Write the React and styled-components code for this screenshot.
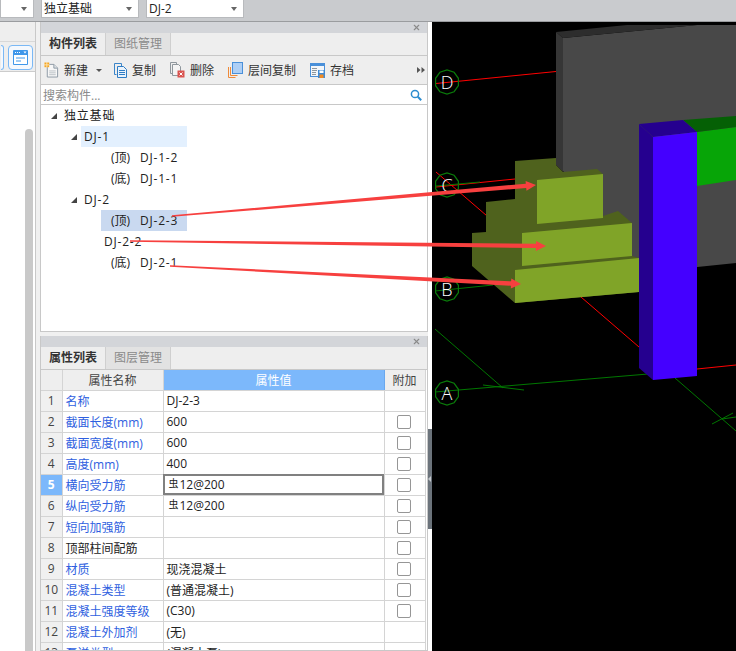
import React from 'react'
import styled, { createGlobalStyle } from 'styled-components'
import { X } from 'lucide-react'

const treeRows = [
  { level: 0, open: true, code: '独立基础' },
  { level: 1, open: true, code: 'DJ-1', tone: 'hover' },
  { level: 2, tag: '(顶)', code: 'DJ-1-2' },
  { level: 2, tag: '(底)', code: 'DJ-1-1' },
  { level: 1, open: true, code: 'DJ-2' },
  { level: 2, tag: '(顶)', code: 'DJ-2-3', tone: 'selected' },
  { level: 2, code: 'DJ-2-2', tight: true },
  { level: 2, tag: '(底)', code: 'DJ-2-1' },
]

const propRows = [
  { name: '名称', value: 'DJ-2-3' },
  { name: '截面长度(mm)', value: '600', check: true },
  { name: '截面宽度(mm)', value: '600', check: true },
  { name: '高度(mm)', value: '400', check: true },
  { name: '横向受力筋', value: '12@200', rebar: true, check: true, active: true },
  { name: '纵向受力筋', value: '12@200', rebar: true, check: true },
  { name: '短向加强筋', value: '', check: true },
  { name: '顶部柱间配筋', value: '', check: true, plain: true },
  { name: '材质', value: '现浇混凝土', check: true },
  { name: '混凝土类型', value: '(普通混凝土)', check: true },
  { name: '混凝土强度等级', value: '(C30)', check: true },
  { name: '混凝土外加剂', value: '(无)' },
  { name: '泵送类型', value: '(混凝土泵)' },
]

const axisMarks = [
  { label: 'D', y: 82 },
  { label: 'C', y: 185 },
  { label: 'B', y: 289 },
  { label: 'A', y: 393 },
]

const arrows = [
  { from: [172, 216], to: [536, 185] },
  { from: [130, 241], to: [546, 246] },
  { from: [170, 266], to: [521, 284] },
]

const ringPoints = (cy) =>
  Array.from({ length: 10 }, (_, i) => {
    const a = (i * Math.PI) / 5 + Math.PI / 10
    return `${(447 + 12 * Math.cos(a)).toFixed(1)},${(cy + 12 * Math.sin(a)).toFixed(1)}`
  }).join(' ')

// tapered shaft + head, widening towards the tip
const arrowPoints = ({ from, to }) => {
  const dx = to[0] - from[0]
  const dy = to[1] - from[1]
  const len = Math.hypot(dx, dy)
  const ux = dx / len
  const uy = dy / len
  const at = (along, side) => {
    const x = from[0] + ux * along - uy * side
    const y = from[1] + uy * along + ux * side
    return `${x.toFixed(1)},${y.toFixed(1)}`
  }
  const neck = len - 10
  return [at(0, 0.8), at(neck, 2.2), at(neck, 5), at(len, 0), at(neck, -5), at(neck, -2.2), at(0, -0.8)].join(' ')
}

const NewIcon = () => (
  <svg width="15" height="16" viewBox="0 0 16 17">
    <path d="M3.5 2.5h7l4 4v9.500h-11z" fill="#f7f7f7" stroke="#8b98a3" />
    <path d="M10.500 2.500v4h4" fill="#dfe3e6" stroke="#8b98a3" />
    <path d="M5.500 9.500h7M5.500 11.500h7M5.500 13.500h7" stroke="#b9bfc4" />
    <rect x="0.500" y="0.500" width="5" height="5" fill="#f5a623" />
    <path d="M3 0v6M0 3h6" stroke="#fde3b0" />
  </svg>
)

const CopyIcon = () => (
  <svg width="13" height="15" viewBox="0 0 13 15">
    <path d="M0.500 0.500h7v3M0.500 0.500v11h2" fill="none" stroke="#3b85c9" />
    <path d="M3.500 3.500h6l3 3v8h-9z" fill="#eaf3fb" stroke="#2f7cc4" />
    <path d="M5 7.500h6M5 9.500h6M5 11.500h6" stroke="#2f7cc4" />
  </svg>
)

const DeleteIcon = () => (
  <svg width="15" height="16" viewBox="0 0 15 16">
    <path d="M0.500 0.500h6v2M0.500 0.500v11h2" fill="none" stroke="#8f979d" />
    <path d="M2.500 2.500h6l2 2v9h-8z" fill="#f4f4f4" stroke="#8f979d" />
    <rect x="7.500" y="8.500" width="7" height="7" fill="#d9534f" />
    <path d="M9.500 10.500l3 3M12.500 10.500l-3 3" stroke="#fff" />
  </svg>
)

const LayerCopyIcon = () => (
  <svg width="15" height="16" viewBox="0 0 15 16">
    <rect x="4.500" y="0.500" width="10" height="11" fill="#aecff5" stroke="#4a90d9" />
    <path d="M0.500 5v10.500h7M2.500 5v8.500h7" fill="none" stroke="#ee8a3a" />
  </svg>
)

const SaveIcon = () => (
  <svg width="15" height="15" viewBox="0 0 15 15">
    <rect x="0.500" y="0.500" width="14" height="13" fill="#f3f6f9" stroke="#4a90d9" />
    <rect x="0" y="0" width="15" height="3" fill="#4a90d9" />
    <path d="M2 5.500h5M2 7.500h5M2 9.500h4M2 11.500h4" stroke="#8f979d" />
    <rect x="8" y="7" width="7" height="8" fill="#3f8ad4" />
    <rect x="9.500" y="7.500" width="4" height="2.500" fill="#fff" />
    <rect x="9.500" y="11.500" width="4" height="3.500" fill="#f08a24" />
  </svg>
)

const WindowIcon = () => (
  <svg width="15" height="15" viewBox="0 0 15 15">
    <rect x="0" y="0" width="15" height="15" rx="1" fill="#3f97ea" />
    <rect x="1" y="5" width="13" height="9" fill="#fff" />
    <path d="M2 2.500h1M4 2.500h1M6 2.500h1" stroke="#fff" />
    <path d="M10.500 1.500h3l-1.500 2z" fill="#fff" />
    <path d="M3 8h9" stroke="#3f97ea" />
    <path d="M3 11h5" stroke="#3f97ea" />
  </svg>
)

const SearchIcon = () => (
  <svg width="12" height="12" viewBox="0 0 12 12">
    <circle cx="5" cy="5" r="3.600" fill="none" stroke="#2b8ccf" strokeWidth="1.500" />
    <path d="M7.800 7.800l3.400 3.400" stroke="#2b8ccf" strokeWidth="2" />
  </svg>
)

const MoreIcon = () => (
  <svg width="8" height="6" viewBox="0 0 8 6">
    <path d="M0 0l3.500 3L0 6zM4.500 0L8 3 4.500 6z" fill="#555" />
  </svg>
)

const Scene = () => (
  <svg width="304" height="629" viewBox="432 22 304 629">
    <rect x="432" y="22" width="304" height="629" fill="#000" />

    {/* axis lines behind the solids */}
    <g stroke="#f00" strokeWidth="1" fill="none">
      <path d="M436 83.500L556 71.500" />
      <path d="M436 187L515 179" />
      <path d="M436 172L639 347" />
      <path d="M697 369L736 365" />
    </g>
    <g stroke="#070" strokeWidth="1" fill="none">
      <path d="M436 186L480 182" />
      <path d="M435 291L493 285" />
      <path d="M435 392L648 374" />
      <path d="M435 329L503 388" />
      <path d="M483 385L524 390" />
      <path d="M675 378L736 431" />
      <path d="M712 424L733 413" />
      <path d="M722 419L736 417" />
    </g>

    {/* wall */}
    <polygon points="563,38 697,25 736,25 736,263 639,273 563,171" fill="#484848" />
    <polygon points="556,32 627,25 697,25 563,38" fill="#2d2d2d" />
    <polygon points="556,32 563,38 563,172 556,165" fill="#363636" />

    {/* footing */}
    <polygon
      points="515,161 556,158 556,165 563,172 597,169 603,174 603,216 618,211 632,223 632,256 639,258 639,292 515,303 472,266 472,233 486,232 486,202 515,199"
      fill="#4f621d"
    />
    <polygon points="537,180 603,174 603,218 537,224" fill="#80a428" />
    <polygon points="522,233 632,223 632,256 522,266" fill="#80a428" />
    <polygon points="515,270 639,258 639,292 515,303" fill="#80a428" />

    {/* column and beam */}
    <polygon points="697,132 736,127 736,180 697,186" fill="#07a507" />
    <polygon points="683,120 736,116 736,127 697,132" fill="#056005" />
    <polygon points="639,124 683,120 697,132 653,137" fill="#25008f" />
    <polygon points="639,124 653,137 653,380 639,368" fill="#25008f" />
    <polygon points="653,137 697,132 697,376 653,380" fill="#4400ff" />

    {axisMarks.map((m) => (
      <g key={m.label}>
        <polygon points={ringPoints(m.y)} fill="none" stroke="#0a7a0a" strokeWidth="1.200" />
        <AxisLetter x="447" y={m.y + 6.500} textAnchor="middle">
          {m.label}
        </AxisLetter>
      </g>
    ))}
  </svg>
)

const App = () => (
  <Page>
    <GlobalStyle />
    <TopBar>
      <Combo $width={34} />
      <Combo $width={98}>独立基础</Combo>
      <Combo $width={98}>DJ-2</Combo>
    </TopBar>

    <Main>
      <LeftStrip>
        <StripTop />
        <StripIcons>
          <StripButton $cut />
          <StripButton>
            <WindowIcon />
          </StripButton>
        </StripIcons>
        <StripBody>
          <ScrollThumb />
        </StripBody>
      </LeftStrip>

      <Panels>
        <Panel $height={310}>
          <PanelHead>
            <X size={9} strokeWidth={3} color="#8a8a8a" />
          </PanelHead>
          <Tabs>
            <Tab $active>构件列表</Tab>
            <Tab>图纸管理</Tab>
          </Tabs>
          <Toolbar>
            <Tool>
              <NewIcon />
              新建
              <ToolCaret />
            </Tool>
            <Tool>
              <CopyIcon />
              复制
            </Tool>
            <Tool>
              <DeleteIcon />
              删除
            </Tool>
            <Tool>
              <LayerCopyIcon />
              层间复制
            </Tool>
            <Tool>
              <SaveIcon />
              存档
            </Tool>
            <More>
              <MoreIcon />
            </More>
          </Toolbar>
          <SearchRow>
            搜索构件...
            <SearchIcon />
          </SearchRow>
          <Tree>
            {treeRows.map((row, i) => (
              <TreeRow key={i} $level={row.level}>
                <TreeCaret $open={row.open} />
                <TreeLabel $level={row.level} $tone={row.tone} $tight={row.tight}>
                  {row.tag && <TreeTag>{row.tag}</TreeTag>}
                  <TreeCode>{row.code}</TreeCode>
                </TreeLabel>
              </TreeRow>
            ))}
          </Tree>
        </Panel>

        <Panel>
          <PanelHead>
            <X size={9} strokeWidth={3} color="#8a8a8a" />
          </PanelHead>
          <Tabs>
            <Tab $active>属性列表</Tab>
            <Tab>图层管理</Tab>
          </Tabs>
          <PropTable>
            <colgroup>
              <col width="21" />
              <col width="101" />
              <col width="221" />
              <col width="41" />
            </colgroup>
            <thead>
              <tr>
                <HeadCell />
                <HeadCell>属性名称</HeadCell>
                <HeadCell $blue>属性值</HeadCell>
                <HeadCell>附加</HeadCell>
              </tr>
            </thead>
            <tbody>
              {propRows.map((row, i) => (
                <tr key={row.name}>
                  <IndexCell $active={row.active}>{i + 1}</IndexCell>
                  <NameCell $plain={row.plain}>{row.name}</NameCell>
                  <ValueCell $active={row.active}>
                    {row.rebar && <Rebar>虫</Rebar>}
                    {row.value}
                  </ValueCell>
                  <CheckCell>{row.check && <CheckBox />}</CheckCell>
                </tr>
              ))}
            </tbody>
          </PropTable>
        </Panel>
      </Panels>

      <Splitter>
        <SplitHandle />
      </Splitter>

      <Viewport>
        <Scene />
      </Viewport>
    </Main>

    <ArrowLayer width="736" height="651" viewBox="0 0 736 651">
      {arrows.map((a, i) => (
        <polygon key={i} points={arrowPoints(a)} fill="#f7403f" />
      ))}
    </ArrowLayer>
  </Page>
)

export default App

const GlobalStyle = createGlobalStyle`
  html, body {
    margin: 0;
    padding: 0;
    overflow: hidden;
    background: #f0f0f0;
  }
  * {
    box-sizing: border-box;
  }
`

const Page = styled.div`
  position: relative;
  width: 736px;
  height: 651px;
  overflow: hidden;
  display: flex;
  flex-direction: column;
  font-family: 'Open Sans', 'Noto Sans CJK SC', sans-serif;
  font-size: 12px;
  color: #222;
`

const TopBar = styled.div`
  flex: none;
  height: 22px;
  display: flex;
  gap: 7px;
  background: #c9cbce;
  border-bottom: 1px solid #9a9c9f;
`

const Combo = styled.div`
  position: relative;
  width: ${(p) => p.$width}px;
  height: 18px;
  padding-left: 2px;
  line-height: 17px;
  font-size: 12px;
  background: #fff;
  border: 1px solid #b8babd;
  border-top: none;
  color: #222;

  &::after {
    content: '';
    position: absolute;
    right: 6px;
    top: 7px;
    border-left: 3px solid transparent;
    border-right: 3px solid transparent;
    border-top: 4px solid #666;
  }
`

const Main = styled.div`
  flex: 1;
  min-height: 0;
  display: flex;
`

const LeftStrip = styled.div`
  flex: none;
  width: 36px;
  margin-right: 4px;
  display: flex;
  flex-direction: column;
  background: #fff;
  border-right: 1px solid #c8c8c8;
`

const StripTop = styled.div`
  flex: none;
  height: 20px;
  background: #eee;
  border-bottom: 1px solid #d8d8d8;
`

const StripIcons = styled.div`
  flex: none;
  height: 30px;
  padding-top: 3px;
  display: flex;
  justify-content: flex-end;
  gap: 4px;
  padding-right: 2px;
  background: #eee;
  border-bottom: 1px solid #ccc;
`

const StripButton = styled.div`
  flex: none;
  width: ${(p) => (p.$cut ? 3 : 25)}px;
  height: 25px;
  display: flex;
  align-items: center;
  justify-content: center;
  background: #f4f8fd;
  border: 1px solid #7ab8f5;
  border-left: ${(p) => (p.$cut ? 'none' : '1px solid #7ab8f5')};
  border-radius: ${(p) => (p.$cut ? '0 4px 4px 0' : '4px')};
`

const StripBody = styled.div`
  flex: 1;
  padding: 57px 2px 0 25px;
`

const ScrollThumb = styled.div`
  height: 100%;
  margin-bottom: -10px;
  background: #c9c9c9;
  border-radius: 4px 4px 0 0;
`

const Panels = styled.div`
  flex: none;
  width: 388px;
  display: flex;
  flex-direction: column;
  gap: 4px;
`

const Panel = styled.section`
  flex: ${(p) => (p.$height ? 'none' : '1')};
  height: ${(p) => (p.$height ? `${p.$height}px` : 'auto')};
  min-height: 0;
  display: flex;
  flex-direction: column;
  overflow: hidden;
  background: #fff;
  border-left: 1px solid #c8c8c8;
  border-right: 1px solid #c8c8c8;
  border-bottom: 1px solid #c8c8c8;
`

const PanelHead = styled.div`
  flex: none;
  height: 11px;
  padding-right: 6px;
  display: flex;
  align-items: center;
  justify-content: flex-end;
  background: #d3d5d9;
`

const Tabs = styled.div`
  flex: none;
  height: 23px;
  display: flex;
  background: #eee;
  border-bottom: 1px solid #c8c8c8;
`

const Tab = styled.div`
  width: 65px;
  height: 22px;
  line-height: 22px;
  text-align: center;
  font-weight: ${(p) => (p.$active ? 700 : 400)};
  color: ${(p) => (p.$active ? '#333' : '#8a8a8a')};
  background: ${(p) => (p.$active ? '#eee' : '#e2e2e2')};
  border-right: 1px solid #cfcfcf;
`

const Toolbar = styled.div`
  flex: none;
  height: 29px;
  padding: 0 2px 0 3px;
  display: flex;
  align-items: center;
  gap: 14px;
  background: #eee;
  border-bottom: 1px solid #c8c8c8;
`

const Tool = styled.div`
  display: flex;
  align-items: center;
  gap: 5px;
  color: #333;
`

const ToolCaret = styled.span`
  margin: 0 -2px 0 3px;
  border-left: 3px solid transparent;
  border-right: 3px solid transparent;
  border-top: 3px solid #555;
`

const More = styled.span`
  margin-left: auto;
  line-height: 0;
`

const SearchRow = styled.div`
  flex: none;
  height: 20px;
  padding: 0 5px 0 2px;
  display: flex;
  align-items: center;
  justify-content: space-between;
  color: #8a8a8a;
  background: #fff;
  border-bottom: 1px solid #c8c8c8;
`

const Tree = styled.div`
  flex: 1;
  background: #fff;
`

const TreeRow = styled.div`
  height: 21px;
  padding-left: ${(p) => 10 + p.$level * 20}px;
  display: flex;
  align-items: center;
`

const TreeCaret = styled.span`
  flex: none;
  width: 10px;
  height: 6px;

  &::before {
    content: '';
    display: ${(p) => (p.$open ? 'block' : 'none')};
    width: 0;
    border-left: 6px solid transparent;
    border-bottom: 6px solid #444;
  }
`

const TreeLabel = styled.div`
  height: 21px;
  line-height: 21px;
  width: ${(p) => (p.$level === 1 ? '106px' : p.$level === 2 ? '86px' : 'auto')};
  padding-left: ${(p) => (p.$level === 2 && !p.$tight ? 10 : 3)}px;
  white-space: nowrap;
  background: ${(p) =>
    p.$tone === 'hover' ? '#e3f0fe' : p.$tone === 'selected' ? '#c9d9f0' : 'transparent'};
`

const TreeTag = styled.span`
  display: inline-block;
  width: 29px;
`

const TreeCode = styled.span`
  letter-spacing: 0.800px;
`

const PropTable = styled.table`
  flex: none;
  width: 384px;
  table-layout: fixed;
  border-collapse: collapse;
  background: #fff;
`

const HeadCell = styled.th`
  height: 20px;
  padding: 0;
  font-weight: 400;
  color: ${(p) => (p.$blue ? '#fff' : '#444')};
  background: ${(p) => (p.$blue ? '#7cb8fb' : '#eee')};
  border-right: 1px solid ${(p) => (p.$blue ? '#6aa8ee' : '#d4d4d4')};
  border-bottom: 1px solid #d4d4d4;
`

const BodyCell = styled.td`
  height: 21px;
  padding: 0;
  overflow: hidden;
  white-space: nowrap;
  border-right: 1px solid #d4d4d4;
  border-bottom: 1px solid #d4d4d4;
`

const IndexCell = styled(BodyCell)`
  text-align: center;
  color: ${(p) => (p.$active ? '#fff' : '#444')};
  font-weight: ${(p) => (p.$active ? 700 : 400)};
  background: ${(p) => (p.$active ? '#7cb8fb' : '#f0f0f0')};
`

const NameCell = styled(BodyCell)`
  padding-left: 3px;
  color: ${(p) => (p.$plain ? '#222' : '#2f5fe0')};
`

const ValueCell = styled(BodyCell)`
  padding-left: 3px;
  color: #222;
  outline: ${(p) => (p.$active ? '2px solid #808080' : 'none')};
  outline-offset: -2px;
`

const Rebar = styled.span`
  position: relative;
  top: -2px;
  margin: 0 1px 0 2px;
  font-size: 10px;
`

const CheckCell = styled(BodyCell)`
  text-align: center;
`

const CheckBox = styled.span`
  display: block;
  width: 14px;
  height: 14px;
  margin: 0 0 0 12px;
  background: #fff;
  border: 1px solid #969696;
  border-radius: 2px;
`

const Splitter = styled.div`
  flex: none;
  width: 4px;
  padding-top: 407px;
  background: #fff;
`

const SplitHandle = styled.div`
  position: relative;
  height: 100px;
  background: #6b737b;

  &::after {
    content: '';
    position: absolute;
    left: 0;
    top: 47px;
    border-top: 3px solid transparent;
    border-bottom: 3px solid transparent;
    border-right: 3px solid #c4c8cc;
  }
`

const Viewport = styled.div`
  flex: 1;
  min-width: 0;
  background: #000;
  line-height: 0;
`

const AxisLetter = styled.text`
  font-family: 'Open Sans', sans-serif;
  font-size: 18px;
  font-weight: 300;
  fill: #fff;
`

const ArrowLayer = styled.svg`
  position: absolute;
  left: 0;
  top: 0;
  pointer-events: none;
`
